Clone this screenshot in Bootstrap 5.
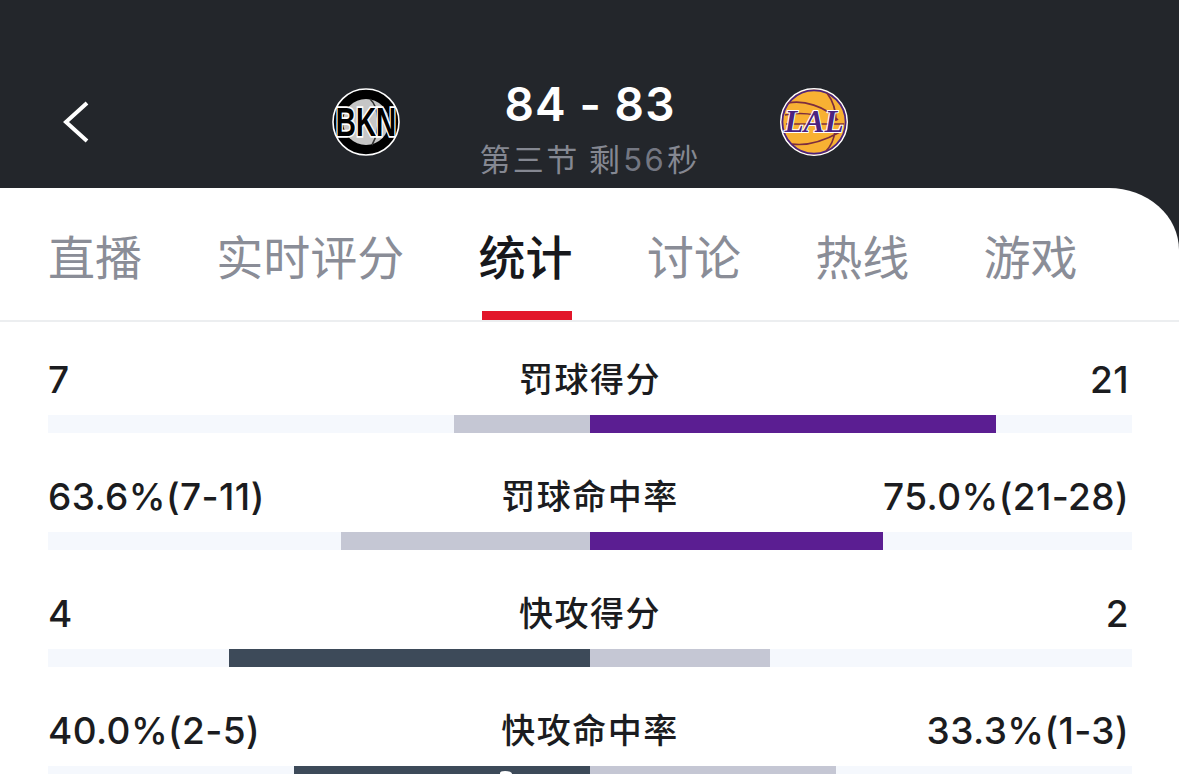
<!doctype html>
<html lang="zh"><head><meta charset="utf-8">
<link href="https://cdn.jsdelivr.net/npm/bootstrap@5.3.0/dist/css/bootstrap.min.css" rel="stylesheet">
<style>
html,body{height:774px;overflow:hidden;background:#23262b;margin:0}
body{font-family:Inter,"Noto Sans CJK SC",sans-serif;color:#1b1c20}
.hdr{height:188px;background:#23262b}
.hdr-inner{height:188px;padding-top:78px}
.arrow{flex:none;margin:22px 0 0 63px}
.score{font-size:46px;font-weight:600;line-height:52px;color:#fff;letter-spacing:1.1px;white-space:nowrap}
.period{font-size:31px;line-height:36px;color:#858892;margin-top:10px;font-family:"Noto Sans CJK SC",sans-serif;white-space:nowrap;letter-spacing:2.4px}
.period i{font-style:normal;font-family:Inter,sans-serif;color:#747782;margin:0 1px}
.mid{width:240px;margin-left:-9px;margin-right:9px}
.lg{width:68px;height:68px;flex:none;margin-top:10px;overflow:visible}
.lg1{margin-left:241px;margin-right:79px}
.lg2{margin-left:61px}
.panel{background:#fff;border-top-right-radius:70px 62px;height:586px;overflow:hidden;position:relative}
.tabs{height:134px;border-bottom:2px solid #eceef0;padding-left:48px;gap:74.3px}
.tabx{font-family:"Noto Sans CJK SC",sans-serif;font-size:47px;color:#8a8d97;line-height:66px;padding-top:34px;position:relative;height:132px;white-space:nowrap}
.tabx.on{color:#17181c;font-weight:500}
.tabx.on::after{content:"";position:absolute;left:3px;right:1px;bottom:0;height:9px;background:#e2162a}
.stats{padding:0 47px 0 48px}
.st{height:117px;padding-top:36px}
.lbls{height:42px;font-size:37px;line-height:42px;font-weight:500;letter-spacing:.4px;white-space:nowrap;position:relative;top:1px;padding-right:3px}
.ttl{font-family:"Noto Sans CJK SC",sans-serif;font-size:34px;font-weight:500;letter-spacing:1.5px;position:absolute;left:0;width:1084px;text-align:center;top:-2px}
.trk{height:18px;background:#f5f8fd;margin-top:13px;display:flex;position:relative;top:2px}
.hf{width:50%;display:flex}
.hf.lf{justify-content:flex-end}
.hf>div{height:18px}
.gr{background:#c5c7d4}.pu{background:#5b1e92}.sl{background:#3d4a59}
.blob{position:absolute;left:500px;top:583px;width:12px;height:5px;background:#fff;border-radius:60% 80% 0 0}
</style></head><body>
<div class="hdr"><div class="hdr-inner d-flex align-items-start">
<svg width="28" height="44" viewBox="0 0 28 44" class="arrow"><path d="M24 3 3 22l21 19" fill="none" stroke="#fff" stroke-width="4"/></svg>
<svg class="lg lg1" viewBox="0 0 68 68"><circle cx="34" cy="34" r="33" fill="#000" stroke="#fff" stroke-width="1.6"/><circle cx="34" cy="34" r="23" fill="#c6c6c6"/><path d="M38 11c9 8 11 30 2 46" fill="none" stroke="#333" stroke-width="1.6"/><text transform="translate(34 48) scale(.93 1.35)" text-anchor="middle" font-family="Liberation Sans,sans-serif" font-size="30" font-weight="700" fill="#000" stroke="#fff" stroke-width="2.6" paint-order="stroke">BKN</text></svg>
<div class="mid text-center"><div class="score">84 - 83</div><div class="period">第三节 剩<i>56</i>秒</div></div>
<svg class="lg lg2" viewBox="0 0 68 68"><circle cx="34" cy="34" r="33.2" fill="#f8b133" stroke="#fff" stroke-width="1.6"/><circle cx="34" cy="34" r="31.6" fill="none" stroke="#4b2380" stroke-width="1.8"/><path d="M8 15c16-3 36 3 50 17M47 5c6 8 9 18 9 28M5 27c10-2 20-2 30 0M6 36h58M12 56c14 2 30-2 48-12M46 63c5-5 8-12 9-20" fill="none" stroke="#7c2d3f" stroke-width="1.7"/><text transform="translate(34 44) scale(1.12 1.12)" text-anchor="middle" font-family="Liberation Serif,serif" font-style="italic" font-weight="700" font-size="28" fill="#4b2380" stroke="#fff" stroke-width="1.8" paint-order="stroke">LAL</text></svg>
</div></div>
<div class="panel">
<div class="tabs d-flex">
<div class="tabx">直播</div><div class="tabx">实时评分</div><div class="tabx on">统计</div><div class="tabx">讨论</div><div class="tabx">热线</div><div class="tabx">游戏</div>
</div>
<div class="stats">
<div class="st"><div class="lbls d-flex justify-content-between"><span>7</span><span class="ttl">罚球得分</span><span>21</span></div><div class="trk"><div class="hf lf"><div class="gr" style="width:25.1%"></div></div><div class="hf"><div class="pu" style="width:74.9%"></div></div></div></div>
<div class="st"><div class="lbls d-flex justify-content-between"><span>63.6%(7-11)</span><span class="ttl">罚球命中率</span><span>75.0%(21-28)</span></div><div class="trk"><div class="hf lf"><div class="gr" style="width:46%"></div></div><div class="hf"><div class="pu" style="width:54%"></div></div></div></div>
<div class="st"><div class="lbls d-flex justify-content-between"><span>4</span><span class="ttl">快攻得分</span><span>2</span></div><div class="trk"><div class="hf lf"><div class="sl" style="width:66.7%"></div></div><div class="hf"><div class="gr" style="width:33.3%"></div></div></div></div>
<div class="st"><div class="lbls d-flex justify-content-between"><span>40.0%(2-5)</span><span class="ttl">快攻命中率</span><span>33.3%(1-3)</span></div><div class="trk"><div class="hf lf"><div class="sl" style="width:54.6%"></div></div><div class="hf"><div class="gr" style="width:45.4%"></div></div></div></div>
</div>
<div class="blob"></div>
</div>
</body></html>
